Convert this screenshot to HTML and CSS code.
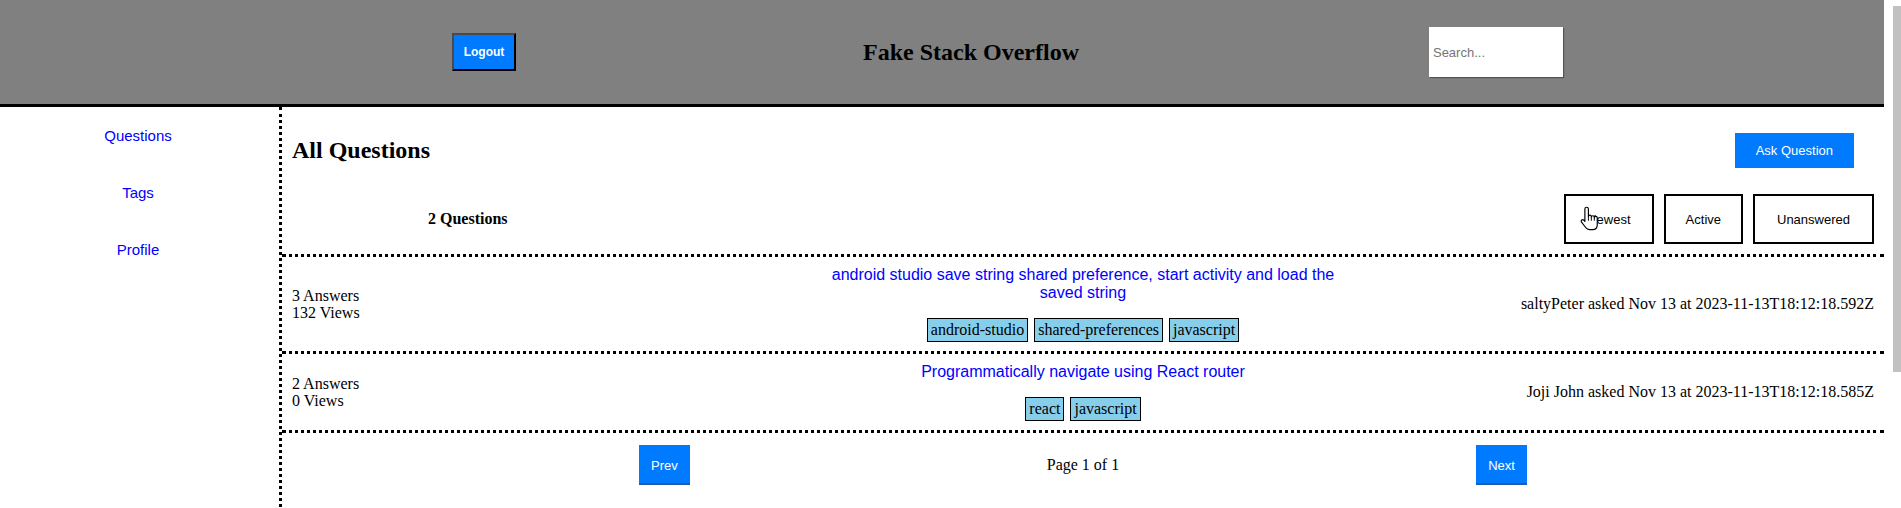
FILE: index.html
```html
<!DOCTYPE html>
<html lang="en">
<head>
<meta charset="utf-8">
<title>Fake Stack Overflow</title>
<link rel="stylesheet" href="styles.css">
</head>
<body>
<div class="page">
  <header class="topbar">
    <button class="btn-logout">Logout</button>
    <h1 class="site-title">Fake Stack Overflow</h1>
    <input class="search" type="text" placeholder="Search...">
  </header>
  <div class="layout">
    <nav class="sidebar">
      <a class="side-link" href="#">Questions</a>
      <a class="side-link" href="#">Tags</a>
      <a class="side-link" href="#">Profile</a>
    </nav>
    <main class="main">
      <section class="main-head">
        <div class="head-row">
          <h2 class="page-title">All Questions</h2>
          <button class="btn-ask">Ask Question</button>
        </div>
        <div class="head-row head-row-2">
          <div class="q-count">2 Questions</div>
          <div class="sort-group">
            <button class="sort-btn sort-newest">Newest<svg class="cursor" viewBox="0 0 17 22" width="20" height="26"><path d="M5 2.5a1.5 1.5 0 0 1 3 0V9a1.25 1.25 0 0 1 2.5 0v.5a1.25 1.25 0 0 1 2.5 0v.5a1.25 1.25 0 0 1 2.5 0v6q0 4-4 4H9q-2 0-3.5-2L2 13.5a1.3 1.3 0 0 1 2-1.6L5 13Z" fill="#fff" stroke="#000" stroke-width="1" stroke-linejoin="round"/><path d="M8 9v3.5M10.5 9.5v3M13 10v2.5" stroke="#000" stroke-width="0.8" fill="none"/></svg></button>
            <button class="sort-btn">Active</button>
            <button class="sort-btn sort-unanswered">Unanswered</button>
          </div>
        </div>
      </section>

      <article class="qrow">
        <div class="q-stats">
          <div>3 Answers</div>
          <div>132 Views</div>
        </div>
        <div class="q-body">
          <div class="q-title">android studio save string shared preference, start activity and load the saved string</div>
          <div class="q-tags">
            <span class="tag">android-studio</span>
            <span class="tag">shared-preferences</span>
            <span class="tag">javascript</span>
          </div>
        </div>
        <div class="q-meta">saltyPeter asked Nov 13 at 2023-11-13T18:12:18.592Z</div>
      </article>

      <article class="qrow">
        <div class="q-stats">
          <div>2 Answers</div>
          <div>0 Views</div>
        </div>
        <div class="q-body">
          <div class="q-title">Programmatically navigate using React router</div>
          <div class="q-tags">
            <span class="tag">react</span>
            <span class="tag">javascript</span>
          </div>
        </div>
        <div class="q-meta">Joji John asked Nov 13 at 2023-11-13T18:12:18.585Z</div>
      </article>

      <div class="pager">
        <button class="btn-page">Prev</button>
        <span class="page-info">Page 1 of 1</span>
        <button class="btn-page">Next</button>
      </div>
    </main>
  </div>
</div>
<div class="scrollbar"><div class="scroll-thumb"></div></div>
</body>
</html>
```
FILE: styles.css
```css
html, body {
  margin: 0;
  padding: 0;
}

body {
  display: flex;
  align-items: flex-start;
  font-family: "Liberation Serif", "Times New Roman", serif;
  font-size: 16px;
  color: #000;
  background: #fff;
}

.page {
  flex: 1;
  min-width: 0;
}

/* Fake window scrollbar */
.scrollbar {
  width: 17px;
  flex-shrink: 0;
  background: #fff;
  display: flex;
  justify-content: flex-end;
}

.scroll-thumb {
  width: 8px;
  height: 366px;
  margin-top: 6px;
  background: #c1c1c1;
}

/* Header */
.topbar {
  display: flex;
  align-items: center;
  height: 104px;
  background: #808080;
  border-bottom: 3px solid #000;
  padding-left: 452px;
  gap: 347px;
}

.btn-logout {
  width: 64px;
  height: 38px;
  background: #007bff;
  color: #fff;
  font-family: "Liberation Sans", Arial, sans-serif;
  font-size: 12px;
  font-weight: bold;
  border-style: solid;
  border-width: 2px;
  border-color: #4a4a4a #000 #000 #4a4a4a;
  padding: 0;
}

.site-title {
  margin: 0;
  font-size: 24px;
  font-weight: bold;
}

.search {
  width: 134px;
  height: 50px;
  box-sizing: border-box;
  margin-left: 3px;
  border: none;
  padding: 0 4px;
  background: #fff;
  box-shadow: 1px 1px 1px rgba(0, 0, 0, 0.35);
  font-family: "Liberation Sans", Arial, sans-serif;
  font-size: 13px;
  outline: none;
}

.search::placeholder {
  color: #757575;
}

/* Layout */
.layout {
  display: flex;
  min-height: 587px;
}

.sidebar {
  width: 276px;
  padding: 20px 3px 0 0;
  border-right: 3px dotted #000;
  display: flex;
  flex-direction: column;
  align-items: center;
  gap: 40px;
  flex-shrink: 0;
}

.side-link {
  color: #0000ff;
  text-decoration: none;
  font-family: "Liberation Sans", Arial, sans-serif;
  font-size: 15px;
  line-height: 17px;
}

.main {
  flex: 1;
  min-width: 0;
}

.main-head {
  padding: 26px 10px 10px 10px;
  border-bottom: 3px dotted #000;
}

.head-row {
  display: flex;
  justify-content: space-between;
  align-items: center;
}

.head-row-2 {
  margin-top: 26px;
}

.page-title {
  margin: 0;
  font-size: 24px;
  font-weight: bold;
}

.btn-ask {
  height: 35px;
  padding: 0 21px;
  margin-right: 20px;
  background: #007bff;
  color: #fff;
  border: none;
  font-family: "Liberation Sans", Arial, sans-serif;
  font-size: 13px;
}

.q-count {
  margin-left: 136px;
  font-weight: bold;
  font-size: 16px;
}

.sort-group {
  display: flex;
  gap: 10px;
}

.sort-btn {
  position: relative;
  height: 50px;
  padding: 0 20px;
  background: #fff;
  border: 2px solid #000;
  font-family: "Liberation Sans", Arial, sans-serif;
  font-size: 13px;
  color: #000;
}

.sort-newest {
  padding: 0 21px;
}

.sort-unanswered {
  padding: 0 22px;
}

.cursor {
  position: absolute;
  left: 13px;
  top: 10px;
}

/* Question rows */
.qrow {
  display: grid;
  grid-template-columns: 1fr 530px 1fr;
  align-items: center;
  padding: 0 10px;
  border-bottom: 3px dotted #000;
}

.q-stats {
  line-height: 17px;
}

.q-body {
  text-align: center;
  padding: 9px 0 9px;
}

.q-title {
  color: #0000ff;
  font-family: "Liberation Sans", Arial, sans-serif;
  font-size: 16px;
  line-height: 18px;
}

.q-tags {
  margin-top: 16px;
  display: flex;
  justify-content: center;
  gap: 6px;
}

.tag {
  background: #87ceeb;
  border: 1px solid #000;
  padding: 2px 3px;
  line-height: 18px;
}

.q-meta {
  text-align: right;
}

/* Pager */
.pager {
  display: flex;
  justify-content: space-evenly;
  align-items: center;
  padding-top: 12px;
}

.btn-page {
  height: 40px;
  padding: 0 12px;
  background: #007bff;
  color: #fff;
  border: none;
  box-shadow: inset 0 -2px 0 #1d5fae;
  font-family: "Liberation Sans", Arial, sans-serif;
  font-size: 13px;
}

.page-info {
  font-size: 16px;
}
```
